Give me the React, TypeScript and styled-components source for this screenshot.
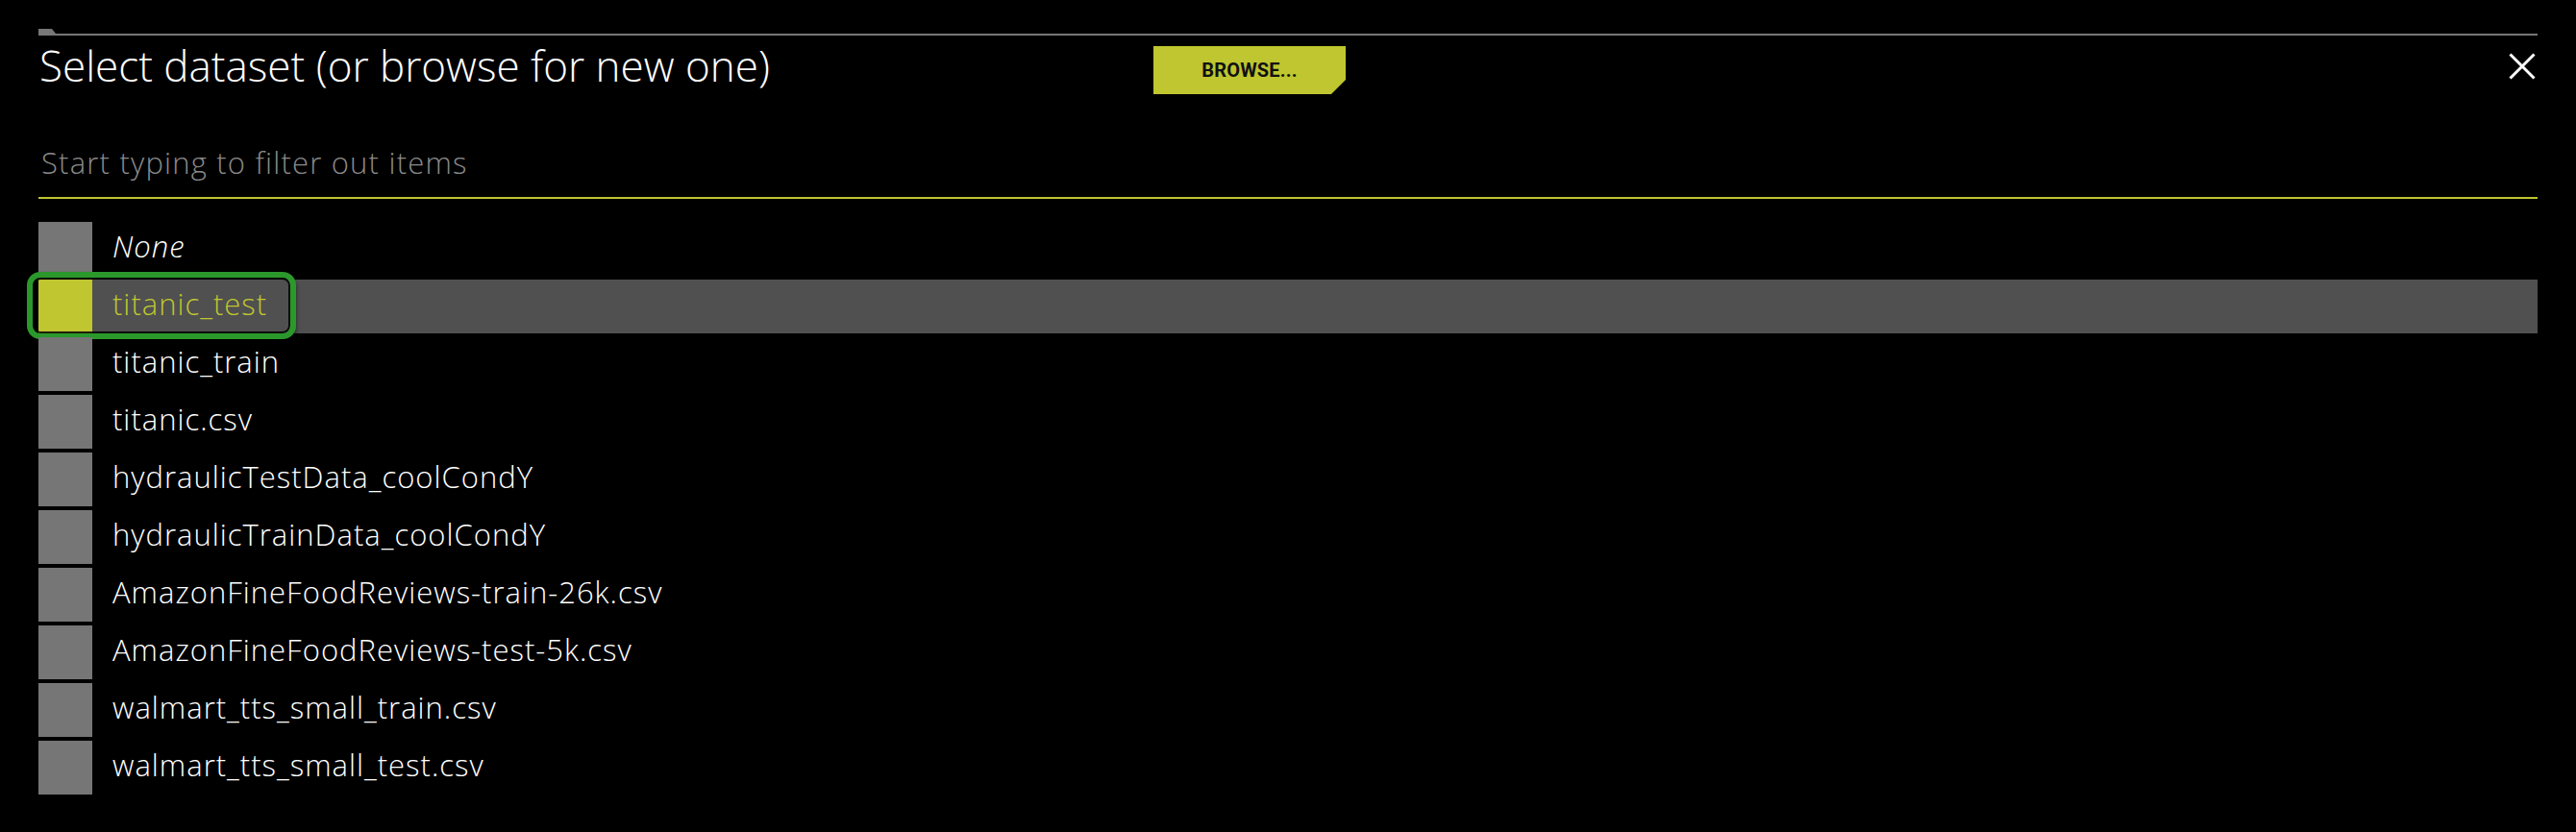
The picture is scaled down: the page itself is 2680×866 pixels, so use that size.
import React from "react";
import styled, { createGlobalStyle } from "styled-components";

const lime = "#bfc62f";

const GlobalStyle = createGlobalStyle`
  html, body {
    margin: 0;
    background: #000;
  }
  body {
    font-family: "Open Sans", "Liberation Sans", sans-serif;
    color: #fff;
  }
`;

const Page = styled.div`
  min-height: 866px;
  padding: 30px 40px 0;
  background: #000;
  box-sizing: border-box;
`;

const Tab = styled.div`
  width: 18px;
  height: 5px;
  background: #777;
  clip-path: polygon(0 0, 14px 0, 100% 100%, 0 100%);
`;

const Rule = styled.div`
  height: 2px;
  background: #777;
`;

const Header = styled.div`
  display: flex;
  align-items: flex-start;
  padding-top: 11px;
`;

const Title = styled.h1`
  width: 1160px;
  margin: -2px 0 0;
  padding-left: 1px;
  box-sizing: border-box;
  font-size: 44px;
  font-weight: 300;
  line-height: 1;
  color: #fff;
`;

const BrowseButton = styled.button`
  width: 200px;
  height: 50px;
  border: 0;
  padding: 0;
  background: ${lime};
  color: #111;
  font-family: "Liberation Sans Narrow", "Roboto", sans-serif;
  font-weight: 700;
  font-size: 20px;
  letter-spacing: 0.2px;
  clip-path: polygon(0 0, 100% 0, 100% calc(100% - 15px), calc(100% - 15px) 100%, 0 100%);
  cursor: pointer;
`;

const Spacer = styled.div`
  flex: 1;
`;

const CloseButton = styled.button`
  width: 32px;
  height: 32px;
  margin-top: 5px;
  padding: 0;
  border: 0;
  background: none;
  cursor: pointer;
  svg {
    display: block;
  }
`;

const Search = styled.input`
  display: block;
  width: 100%;
  box-sizing: border-box;
  height: 53px;
  margin-top: 56px;
  padding: 0 0 21px 3px;
  border: 0;
  border-bottom: 2px solid ${lime};
  background: transparent;
  outline: none;
  font-family: "Open Sans", sans-serif;
  font-size: 31px;
  font-weight: 300;
  line-height: 30px;
  letter-spacing: 1.2px;
  color: #fff;
  &::placeholder {
    color: #8a8a8a;
  }
`;

const List = styled.ul`
  list-style: none;
  margin: 24px 0 0;
  padding: 0;
`;

const Row = styled.li<{ $selected?: boolean }>`
  position: relative;
  display: flex;
  align-items: center;
  height: 56px;
  margin-bottom: 4px;
  background: ${(p) => (p.$selected ? "#505050" : "transparent")};
`;

const Swatch = styled.span<{ $selected?: boolean }>`
  width: 56px;
  height: 56px;
  flex-shrink: 0;
  background: ${(p) => (p.$selected ? lime : "#767676")};
`;

const Label = styled.span<{ $selected?: boolean; $italic?: boolean }>`
  padding: 0 0 7px 21px;
  font-size: 31px;
  font-weight: 300;
  line-height: 30px;
  letter-spacing: 1px;
  font-style: ${(p) => (p.$italic ? "italic" : "normal")};
  color: ${(p) => (p.$selected ? lime : "#fff")};
`;

// green annotation ring drawn over the highlighted row
const Highlight = styled.span`
  position: absolute;
  left: -12px;
  top: -8px;
  width: 280px;
  height: 70px;
  box-sizing: border-box;
  border: 6px solid #2b982b;
  border-radius: 14px;
  box-shadow: inset 0 0 0 2px rgba(0, 0, 0, 0.85), 0 3px 4px rgba(0, 0, 0, 0.6);
  pointer-events: none;
`;

const items = [
  "titanic_test",
  "titanic_train",
  "titanic.csv",
  "hydraulicTestData_coolCondY",
  "hydraulicTrainData_coolCondY",
  "AmazonFineFoodReviews-train-26k.csv",
  "AmazonFineFoodReviews-test-5k.csv",
  "walmart_tts_small_train.csv",
  "walmart_tts_small_test.csv",
];

export default function App() {
  const selected = "titanic_test";
  return (
    <>
      <GlobalStyle />
      <Page>
        <Tab />
        <Rule />
        <Header>
          <Title>Select dataset (or browse for new one)</Title>
          <BrowseButton>BROWSE...</BrowseButton>
          <Spacer />
          <CloseButton aria-label="close">
            <svg width="32" height="32" viewBox="0 0 32 32">
              <path d="M3.5 3.5 L28.5 28.5 M28.5 3.5 L3.5 28.5" stroke="#fff" strokeWidth="3" />
            </svg>
          </CloseButton>
        </Header>
        <Search placeholder="Start typing to filter out items" />
        <List>
          <Row>
            <Swatch />
            <Label $italic>None</Label>
          </Row>
          {items.map((name) => {
            const isSel = name === selected;
            return (
              <Row key={name} $selected={isSel}>
                <Swatch $selected={isSel} />
                <Label $selected={isSel}>{name}</Label>
                {isSel && <Highlight />}
              </Row>
            );
          })}
        </List>
      </Page>
    </>
  );
}
